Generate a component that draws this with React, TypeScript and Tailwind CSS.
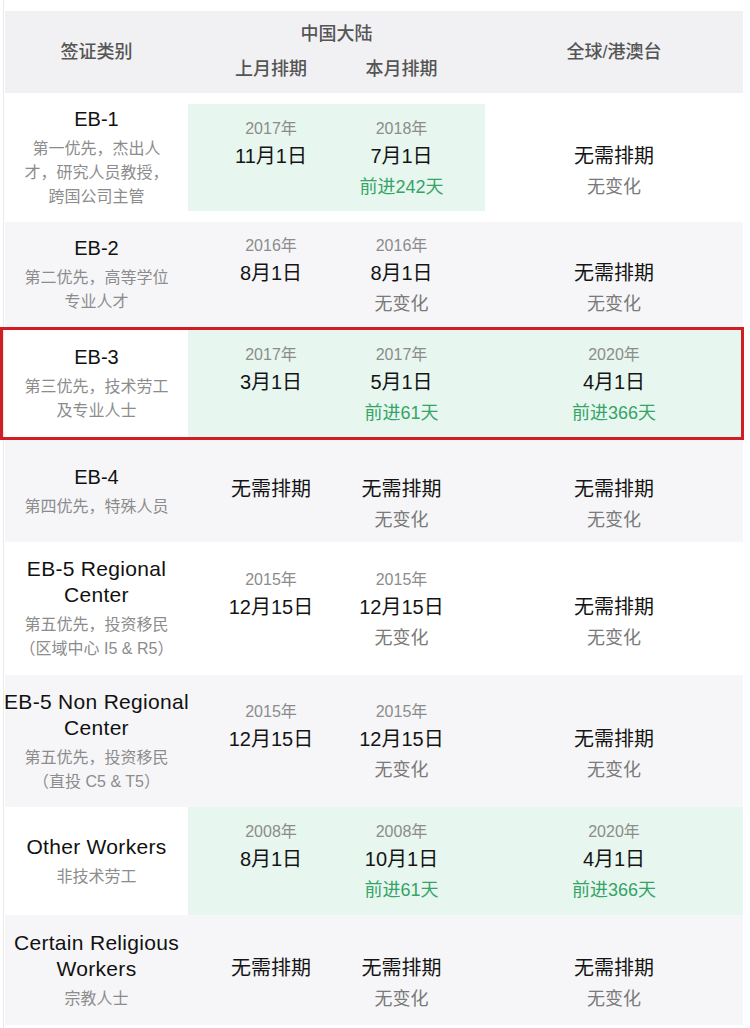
import React from "react";

type Cell = { y?: string; d: string; c?: string; g?: boolean };
type Row = {
  title: string[];
  sub: string[];
  gray: boolean;
  h: string;
  hl?: "inset" | "full";
  red?: boolean;
  cells: [Cell, Cell, Cell];
};

const rows: Row[] = [
  {
    title: ["EB-1"],
    sub: ["第一优先，杰出人", "才，研究人员教授，", "跨国公司主管"],
    gray: false,
    h: "h-[129px]",
    hl: "inset",
    cells: [
      { y: "2017年", d: "11月1日" },
      { y: "2018年", d: "7月1日", c: "前进242天", g: true },
      { d: "无需排期", c: "无变化" },
    ],
  },
  {
    title: ["EB-2"],
    sub: ["第二优先，高等学位", "专业人才"],
    gray: true,
    h: "h-[105px]",
    cells: [
      { y: "2016年", d: "8月1日" },
      { y: "2016年", d: "8月1日", c: "无变化" },
      { d: "无需排期", c: "无变化" },
    ],
  },
  {
    title: ["EB-3"],
    sub: ["第三优先，技术劳工", "及专业人士"],
    gray: false,
    h: "h-[113px]",
    hl: "full",
    red: true,
    cells: [
      { y: "2017年", d: "3月1日" },
      { y: "2017年", d: "5月1日", c: "前进61天", g: true },
      { y: "2020年", d: "4月1日", c: "前进366天", g: true },
    ],
  },
  {
    title: ["EB-4"],
    sub: ["第四优先，特殊人员"],
    gray: true,
    h: "h-[102px]",
    cells: [
      { d: "无需排期" },
      { d: "无需排期", c: "无变化" },
      { d: "无需排期", c: "无变化" },
    ],
  },
  {
    title: ["EB-5 Regional", "Center"],
    sub: ["第五优先，投资移民", "（区域中心 I5 & R5）"],
    gray: false,
    h: "h-[133px]",
    cells: [
      { y: "2015年", d: "12月15日" },
      { y: "2015年", d: "12月15日", c: "无变化" },
      { d: "无需排期", c: "无变化" },
    ],
  },
  {
    title: ["EB-5 Non Regional", "Center"],
    sub: ["第五优先，投资移民", "（直投 C5 & T5）"],
    gray: true,
    h: "h-[132px]",
    cells: [
      { y: "2015年", d: "12月15日" },
      { y: "2015年", d: "12月15日", c: "无变化" },
      { d: "无需排期", c: "无变化" },
    ],
  },
  {
    title: ["Other Workers"],
    sub: ["非技术劳工"],
    gray: false,
    h: "h-[108px]",
    hl: "full",
    cells: [
      { y: "2008年", d: "8月1日" },
      { y: "2008年", d: "10月1日", c: "前进61天", g: true },
      { y: "2020年", d: "4月1日", c: "前进366天", g: true },
    ],
  },
  {
    title: ["Certain Religious", "Workers"],
    sub: ["宗教人士"],
    gray: true,
    h: "h-[110px]",
    cells: [
      { d: "无需排期" },
      { d: "无需排期", c: "无变化" },
      { d: "无需排期", c: "无变化" },
    ],
  },
];

function DateCell({ cell, pad }: { cell: Cell; pad: string }) {
  return (
    <div className={`flex flex-col items-center justify-center pt-[4px] text-center ${pad}`}>
      <div className="h-[26px] text-[16px] leading-[26px] text-[#8c8c8c]">{cell.y ?? ""}</div>
      <div className="h-[28px] text-[20px] leading-[28px] text-[#141414]">{cell.d}</div>
      <div
        className={`h-[34px] text-[18px] leading-[34px] ${
          cell.g ? "text-[#35a468]" : "text-[#7a7a7a]"
        }`}
      >
        {cell.c ?? ""}
      </div>
    </div>
  );
}

function TableRow({ row }: { row: Row }) {
  const bg = row.gray ? "bg-[#f6f6f8]" : "bg-white";
  return (
    <div className={`relative grid grid-cols-[183px_148px_149px_258px] ${row.h} ${bg}`}>
      <div className="flex flex-col items-center justify-center text-center">
        <div className="mb-[5px]">
          {row.title.map((t) =>
            /^EB-\d$/.test(t) ? (
              <div key={t} className="text-[20px] leading-[26px] text-[#111] whitespace-nowrap">
                {t}
              </div>
            ) : (
              <div
                key={t}
                className="text-[21px] leading-[26px] tracking-[0.3px] text-[#111] whitespace-nowrap"
              >
                {t}
              </div>
            )
          )}
        </div>
        {row.sub.map((s) => (
          <div key={s} className="text-[16px] leading-[24px] text-[#8c8c8c] whitespace-nowrap">
            {s}
          </div>
        ))}
      </div>
      {row.hl === "inset" ? (
        <div className="col-span-2 my-[11px] grid grid-cols-[148px_149px] bg-[#e7f6ee]">
          <DateCell cell={row.cells[0]} pad="pl-[18px]" />
          <DateCell cell={row.cells[1]} pad="pr-[18px]" />
        </div>
      ) : row.hl === "full" ? (
        <div className="col-span-3 grid grid-cols-[148px_149px_258px] bg-[#e7f6ee]">
          <DateCell cell={row.cells[0]} pad="pl-[18px]" />
          <DateCell cell={row.cells[1]} pad="pr-[18px]" />
          <DateCell cell={row.cells[2]} pad="" />
        </div>
      ) : (
        <>
          <DateCell cell={row.cells[0]} pad="pl-[18px]" />
          <DateCell cell={row.cells[1]} pad="pr-[18px]" />
        </>
      )}
      {row.hl === "inset" && <DateCell cell={row.cells[2]} pad="" />}
      {!row.hl && <DateCell cell={row.cells[2]} pad="" />}
      {row.red && (
        <div className="pointer-events-none absolute -left-[5px] -right-[1px] top-0 bottom-0 border-[3px] border-[#d31d24]" />
      )}
    </div>
  );
}

export default function App() {
  return (
    <div
      className="flex min-h-[1028px] w-[750px] bg-white"
      style={{ fontFamily: '"Liberation Sans", "Noto Sans CJK SC", sans-serif' }}
    >
      <div className="ml-[3px] w-[1px] bg-[#e9e9e9]" />
      <div className="ml-[1px] pt-[11px]">
        <div className="grid h-[82px] grid-cols-[183px_148px_149px_258px] bg-[#f1f1f3] text-[18px] font-medium text-[#555]">
          <div className="flex items-center justify-center">签证类别</div>
          <div className="col-span-2 flex flex-col justify-center">
            <div className="text-center leading-[35px]">中国大陆</div>
            <div className="grid grid-cols-[148px_149px] leading-[35px]">
              <div className="pl-[18px] text-center">上月排期</div>
              <div className="pr-[18px] text-center">本月排期</div>
            </div>
          </div>
          <div className="flex items-center justify-center">全球/港澳台</div>
        </div>
        {rows.map((r) => (
          <TableRow key={r.title.join(" ")} row={r} />
        ))}
      </div>
    </div>
  );
}
